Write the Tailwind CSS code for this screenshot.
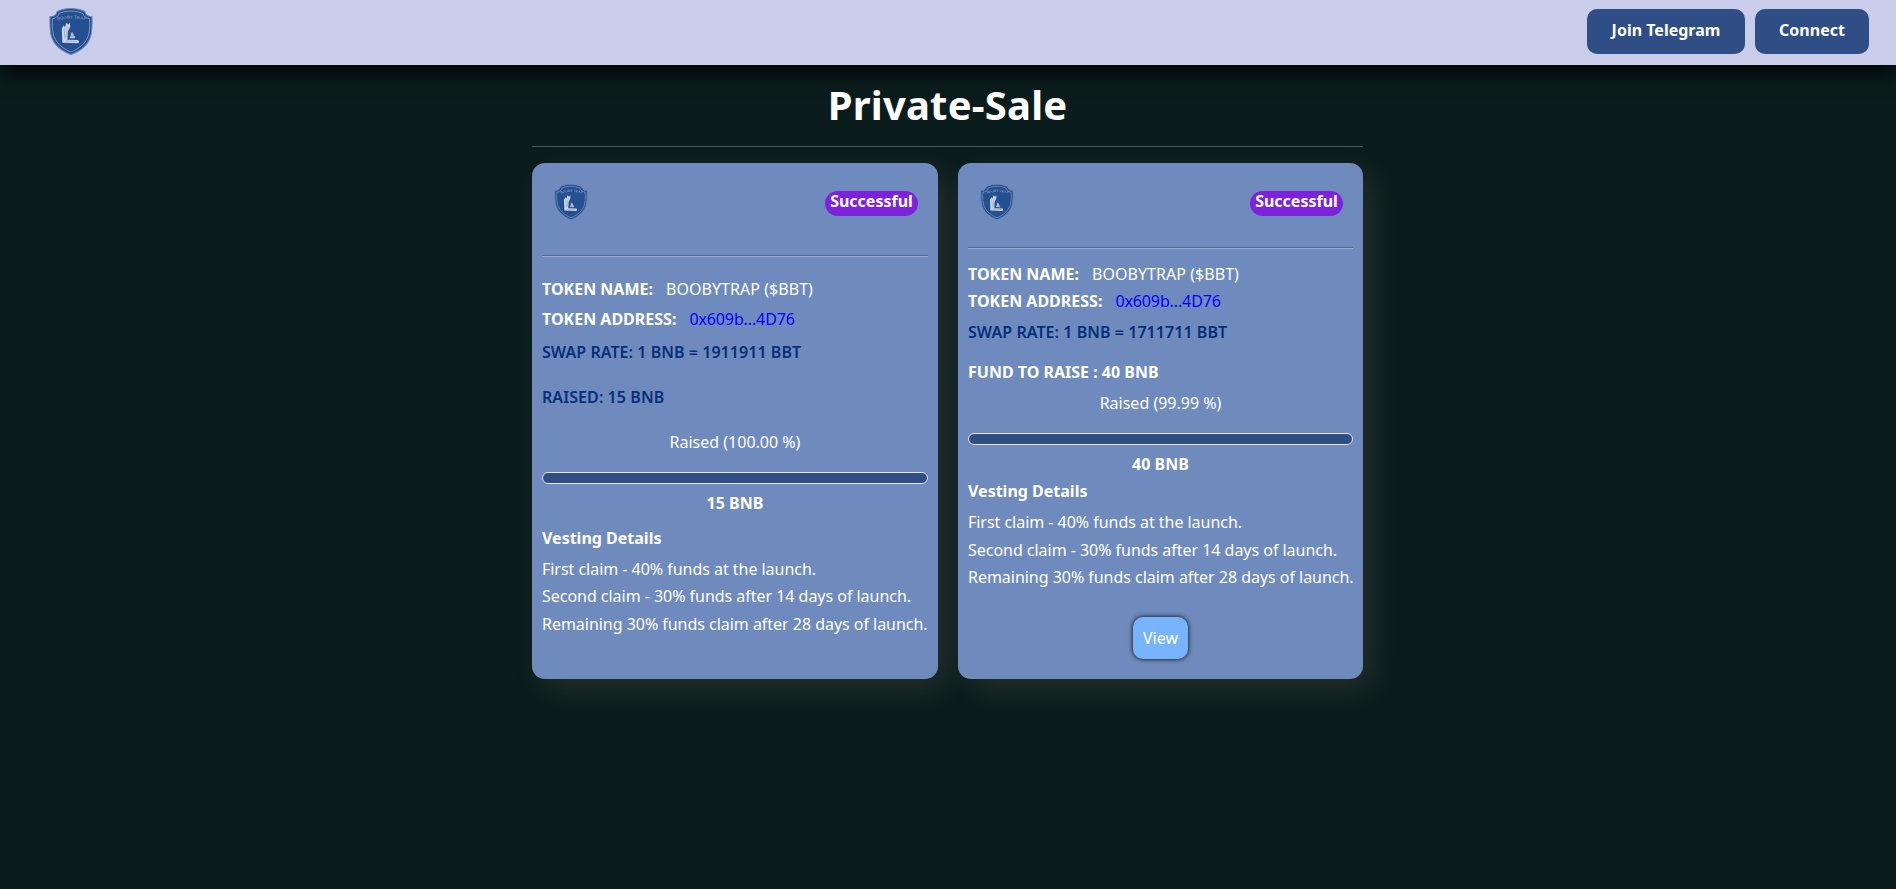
<!DOCTYPE html>
<html lang="en">
<head>
<meta charset="utf-8">
<title>Private-Sale</title>
<script src="https://cdn.jsdelivr.net/npm/@tailwindcss/browser@4"></script>
</head>
<body class="min-h-screen bg-[#0a1c1b] font-['Noto_Sans',sans-serif] text-base leading-[27px] text-white overflow-hidden">
<svg class="hidden">
  <symbol id="shield" viewBox="0 0 43 46">
    <path d="M21.5 .5C16.500 .5 12 1.500 8 3.500C7.500 6.500 4.500 8.500 1 8.500C.8 14 .7 19 1.700 25C3.500 35 12 42 21.500 45.500C31 42 39.500 35 41.300 25C42.300 19 42.200 14 42 8.500C38.500 8.500 35.500 6.500 35 3.500C31 1.500 26.500 .5 21.500 .5Z" fill="#244f90" stroke="#6680b0" stroke-width="1"/>
    <path d="M21.500 3C17 3 13.500 3.800 10 5.300C9 8.300 6.500 10 3.300 10.600C3 16 3.100 20 3.900 24.500C5.700 33.500 13 39.700 21.500 43C30 39.700 37.300 33.500 39.100 24.500C39.900 20 40 16 39.700 10.600C36.500 10 34 8.300 33 5.300C29.500 3.800 26 3 21.500 3Z" fill="none" stroke="#8fa4ca" stroke-width=".8"/>
    <path id="logo-arc" d="M8.300 12.200Q21.500 8.200 36 12.200" fill="none"/>
    <text font-family="Liberation Serif" font-size="4.300" letter-spacing=".1" fill="#a3b4d3"><textPath href="#logo-arc">BOOBY TRAP</textPath></text>
    <path d="M13 34L12.500 20L14.500 17L15.500 19L17 14.500L19 16.500L20.500 14L20.800 18L18.500 23L18 31L28.500 31.300L29.500 33.500L28 34.500Z" fill="#cbd5e3"/>
    <path d="M14.800 20L15.500 30M17.800 18L16.500 29M16 32.500H27" stroke="#8399bd" stroke-width=".6" fill="none"/>
    <path d="M20 29.500L21.500 26.500L21 25.500L22.500 23.500L24.300 25.500L23.800 27L25.800 28L25 29.800Z" fill="#a9bbd6"/>
  </symbol>
</svg>
<header class="relative h-[65px] bg-[#cacdea] flex justify-between pl-[49px] pr-[27px] pt-[9px] shadow-[0_5px_20px_#000]">
  <svg class="w-[44px] h-[47px] -mt-px"><use href="#shield"/></svg>
  <nav class="flex gap-[10px] font-bold">
    <button class="w-[158px] h-[45px] rounded-[10px] bg-[#2e4e85] pb-[3px]">Join Telegram</button>
    <button class="w-[114px] h-[45px] rounded-[10px] bg-[#2e4e85] pb-[3px]">Connect</button>
  </nav>
</header>
<main class="w-[831px] ml-[532px]">
  <h1 class="text-center text-[40px] leading-[54px] tracking-[0.2px] font-bold pt-[13px] h-[82px] border-b border-[#4a5655]">Private-Sale</h1>
  <div class="mt-4 flex gap-5">
    <section class="w-[406px] h-[516px] rounded-[13px] bg-[#6f8bbd] px-[10px] whitespace-nowrap shadow-[10px_10px_30px_rgba(255,225,220,0.1)]">
      <div class="h-[92px] flex justify-between pt-[21px] pl-[12px] pr-[10px]">
        <svg class="w-[34px] h-[36px]"><use href="#shield"/></svg>
        <span class="mt-[7px] h-[25px] w-[93px] rounded-full bg-[#7c22da] text-center font-bold leading-[20px]">Successful</span>
      </div>
      <div class="h-[2px] border-t border-t-[#536b99] border-b border-b-[#9aadd1]"></div>
      <p class="mt-[19px]"><b>TOKEN NAME:</b><span class="ml-[13px] tracking-[0.05px]">BOOBYTRAP ($BBT)</span></p>
      <p class="mt-[3px]"><b>TOKEN ADDRESS:</b><a class="ml-[13px] text-[#0000ff] tracking-[-0.12px]">0x609b...4D76</a></p>
      <p class="mt-[6px] font-semibold tracking-[0.05px] text-[#052f7a]">SWAP RATE: 1 BNB = 1911911 BBT</p>
      <p class="mt-[18px] font-semibold tracking-[0.08px] text-[#052f7a]">RAISED: 15 BNB</p>
      <p class="mt-[18px] text-center">Raised (100.00 %)</p>
      <div class="mt-[16px] h-[12px] rounded-full border border-[#e8e4e4] bg-[#2e4e85]"></div>
      <p class="mt-[6px] text-center font-bold">15 BNB</p>
      <p class="mt-[8px] font-bold">Vesting Details</p>
      <div class="mt-[4px] tracking-[-0.03px]">
        <p>First claim - 40% funds at the launch.</p>
        <p>Second claim - 30% funds after 14 days of launch.</p>
        <p class="mt-px">Remaining 30% funds claim after 28 days of launch.</p>
      </div>
    </section>
    <section class="w-[405px] h-[516px] rounded-[13px] bg-[#6f8bbd] px-[10px] whitespace-nowrap shadow-[10px_10px_30px_rgba(255,225,220,0.1)]">
      <div class="h-[84px] flex justify-between pt-[21px] pl-[12px] pr-[10px]">
        <svg class="w-[34px] h-[36px]"><use href="#shield"/></svg>
        <span class="mt-[7px] h-[25px] w-[93px] rounded-full bg-[#7c22da] text-center font-bold leading-[20px]">Successful</span>
      </div>
      <div class="h-[2px] border-t border-t-[#536b99] border-b border-b-[#9aadd1]"></div>
      <p class="mt-[12px]"><b>TOKEN NAME:</b><span class="ml-[13px] tracking-[0.05px]">BOOBYTRAP ($BBT)</span></p>
      <p><b>TOKEN ADDRESS:</b><a class="ml-[13px] text-[#0000ff] tracking-[-0.12px]">0x609b...4D76</a></p>
      <p class="mt-[4px] font-semibold tracking-[0.05px] text-[#052f7a]">SWAP RATE: 1 BNB = 1711711 BBT</p>
      <p class="mt-[13px] font-bold">FUND TO RAISE : 40 BNB</p>
      <p class="mt-[4px] text-center">Raised (99.99 %)</p>
      <div class="mt-[16px] h-[12px] rounded-full border border-[#e8e4e4] bg-[#2e4e85]"></div>
      <p class="mt-[6px] text-center font-bold">40 BNB</p>
      <p class="font-bold">Vesting Details</p>
      <div class="mt-[4px] tracking-[-0.03px]">
        <p>First claim - 40% funds at the launch.</p>
        <p class="mt-px">Second claim - 30% funds after 14 days of launch.</p>
        <p>Remaining 30% funds claim after 28 days of launch.</p>
      </div>
      <button class="mx-auto mt-[26px] block h-[42px] w-[55px] rounded-[10px] bg-[#78b4fd] shadow-[0_0_5px_#000]">View</button>
    </section>
  </div>
</main>
</body>
</html>
